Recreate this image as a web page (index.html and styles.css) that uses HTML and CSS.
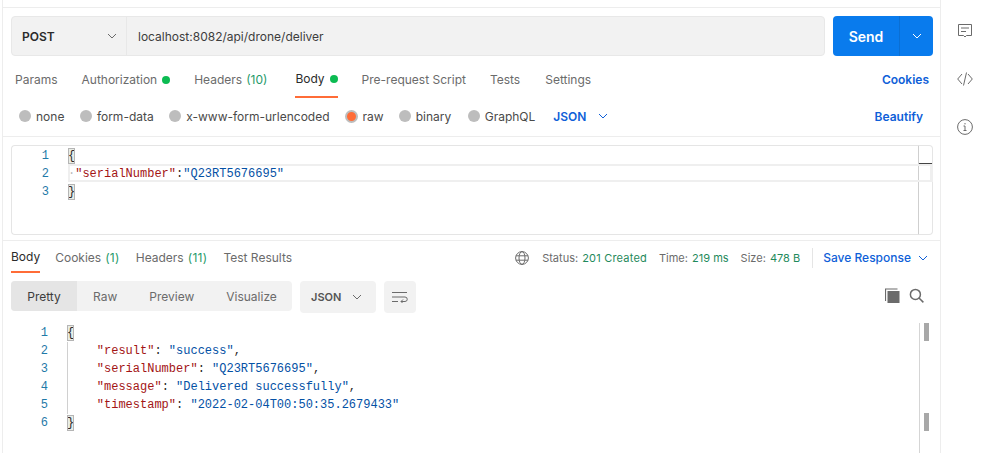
FILE: index.html
```html
<!DOCTYPE html>
<html lang="en">
<head>
<meta charset="utf-8">
<title>Postman request</title>
<link rel="stylesheet" href="styles.css">
</head>
<body>
<div class="app">
  <main class="main">
    <div class="urlrow">
      <div class="urlbar">
        <div class="method"><span>POST</span>
          <svg class="chev" width="12" height="12" viewBox="0 0 12 12"><path d="M2 4l4 4 4-4" fill="none" stroke="#6b6b6b" stroke-width="1"/></svg>
        </div>
        <div class="url">localhost:8082/api/drone/deliver</div>
      </div>
      <div class="send">
        <span class="send-label">Send</span>
        <span class="send-more"><svg width="12" height="12" viewBox="0 0 12 12"><path d="M2 4l4 4 4-4" fill="none" stroke="#fff" stroke-width="1"/></svg></span>
      </div>
    </div>

    <div class="reqtabs">
      <span class="tab t-params">Params</span>
      <span class="tab t-auth">Authorization<i class="dot"></i></span>
      <span class="tab t-headers">Headers <em>(10)</em></span>
      <span class="tab t-body active">Body<i class="dot"></i></span>
      <span class="tab t-pre">Pre-request Script</span>
      <span class="tab t-tests">Tests</span>
      <span class="tab t-settings">Settings</span>
      <span class="link cookies">Cookies</span>
    </div>

    <div class="bodyopts">
      <span class="radio r-none"><i></i>none</span>
      <span class="radio r-form"><i></i>form-data</span>
      <span class="radio r-url"><i></i>x-www-form-urlencoded</span>
      <span class="radio r-raw on"><i></i>raw</span>
      <span class="radio r-bin"><i></i>binary</span>
      <span class="radio r-gql"><i></i>GraphQL</span>
      <span class="link json">JSON<svg width="12" height="12" viewBox="0 0 12 12"><path d="M2 4l4 4 4-4" fill="none" stroke="#0f5fd8" stroke-width="1"/></svg></span>
      <span class="link beautify">Beautify</span>
    </div>

    <div class="editor">
      <div class="ed-code">
        <div class="ln"><span class="no">1</span><span class="code"><b class="br">{</b></span></div>
        <div class="ln"><span class="no">2</span><span class="code"><span class="sp">·</span><span class="k">"serialNumber"</span>:<span class="s">"Q23RT5676695"</span></span></div>
        <div class="ln"><span class="no">3</span><span class="code"><b class="br">}</b></span></div>
      </div>
      <div class="ed-scroll"><i></i></div>
      <div class="curline"></div>
    </div>

    <div class="restabs">
      <span class="rtab active">Body</span>
      <span class="rtab">Cookies <em>(1)</em></span>
      <span class="rtab">Headers <em>(11)</em></span>
      <span class="rtab">Test Results</span>
      <div class="status">
        <svg class="globe" width="14" height="14" viewBox="0 0 14 14" fill="none" stroke="#6b6b6b" stroke-width="1"><circle cx="7" cy="7" r="6.4"/><ellipse cx="7" cy="7" rx="3" ry="6.4"/><path d="M1 4.8h12M1 9.2h12"/></svg>
        <span class="st st-status">Status: <em>201 Created</em></span>
        <span class="st">Time: <em>219 ms</em></span>
        <span class="st">Size: <em>478 B</em></span>
        <span class="save">Save Response<svg width="12" height="12" viewBox="0 0 12 12"><path d="M2 4l4 4 4-4" fill="none" stroke="#0f5fd8" stroke-width="1"/></svg></span>
      </div>
    </div>

    <div class="toolbar">
      <div class="seg">
        <span class="segitem active">Pretty</span>
        <span class="segitem s-raw">Raw</span>
        <span class="segitem s-prev">Preview</span>
        <span class="segitem s-vis">Visualize</span>
      </div>
      <div class="fmt">JSON<svg width="12" height="12" viewBox="0 0 12 12"><path d="M2 4l4 4 4-4" fill="none" stroke="#6b6b6b" stroke-width="1"/></svg></div>
      <div class="wrap"><svg width="16" height="12" viewBox="0 0 16 12" fill="none" stroke="#6b6b6b" stroke-width="1"><path d="M0 1.5h15M0 6h13a2.2 2.2 0 0 1 0 4.5H9M11 8.5l-2 2 2 2M0 10.5h6"/></svg></div>
      <div class="tools">
        <svg width="15" height="15" viewBox="0 0 15 15"><path d="M0.5 13V1h12" fill="none" stroke="#6b6b6b" stroke-width="1.2"/><rect x="2.5" y="3" width="12" height="12" fill="#6b6b6b"/></svg>
        <svg width="15" height="15" viewBox="0 0 15 15" fill="none" stroke="#6b6b6b" stroke-width="1.5"><circle cx="6.4" cy="6.4" r="5"/><path d="M10 10l4.4 4.4"/></svg>
      </div>
    </div>

    <div class="response">
      <div class="resp-code">
        <div class="ln"><span class="no">1</span><span class="code"><b class="br">{</b></span></div>
        <div class="ln"><span class="no">2</span><span class="code guide">    <span class="k">"result"</span>: <span class="s">"success"</span>,</span></div>
        <div class="ln"><span class="no">3</span><span class="code guide">    <span class="k">"serialNumber"</span>: <span class="s">"Q23RT5676695"</span>,</span></div>
        <div class="ln"><span class="no">4</span><span class="code guide">    <span class="k">"message"</span>: <span class="s">"Delivered successfully"</span>,</span></div>
        <div class="ln"><span class="no">5</span><span class="code guide">    <span class="k">"timestamp"</span>: <span class="s">"2022-02-04T00:50:35.2679433"</span></span></div>
        <div class="ln"><span class="no">6</span><span class="code"><b class="br">}</b></span></div>
      </div>
      <div class="resp-scroll"><i></i><i></i></div>
    </div>
  </main>

  <aside class="side">
    <svg width="16" height="16" viewBox="0 0 16 16" fill="none" stroke="#6b6b6b" stroke-width="1"><path d="M1.5 1.5h13v11H9.5L8 14l-1.5-1.5h-5zM4 5h8M4 8.5h5"/></svg>
    <svg width="16" height="16" viewBox="0 0 16 16" fill="none" stroke="#6b6b6b" stroke-width="1"><path d="M5 3L0.7 8 5 13M11 3l4.3 5L11 13M9.5 1.5l-3 13"/></svg>
    <svg width="16" height="16" viewBox="0 0 16 16" fill="none" stroke="#6b6b6b" stroke-width="1"><circle cx="8" cy="8" r="7.4"/><path d="M8 7v4.5M6.5 7H8M6.5 11.5h3M8 4v1.4" /></svg>
  </aside>
</div>
</body>
</html>
```

FILE: styles.css
```css
* { box-sizing: border-box; }
html, body { margin: 0; padding: 0; background: #fff; }
body { width: 989px; height: 453px; overflow: hidden; font-family: Inter, "Liberation Sans", sans-serif; font-size: 12px; color: #6b6b6b; }
em { font-style: normal; }
i { font-style: normal; }

.app { display: flex; height: 453px; }
.main {
  width: 939px; height: 453px; margin-left: 2px;
  border-left: 1px solid #ededed; border-right: 1px solid #ededed;
  overflow: hidden; display: flex; flex-direction: column;
  position: relative; flex: none;
}
.side { flex: 1; display: flex; flex-direction: column; align-items: center; padding-top: 23px; gap: 32px; }

.urlrow { display: flex; margin-top: 7px; border-top: 1px solid #ededed; padding: 8px 7px 0 8px; height: 49px; gap: 8px; flex: none; }
.urlbar { flex: 1; display: flex; height: 40px; background: #f2f2f2; border: 1px solid #e8e8e8; border-radius: 4px; }
.method { width: 115px; border-right: 1px solid #e8e8e8; display: flex; align-items: center; justify-content: space-between; padding: 0 8px 0 10px; font-weight: 600; font-size: 12px; color: #2b2b2b; }
.url { padding-left: 11px; display: flex; align-items: center; font-size: 12px; color: #3d3d3d; }
.send { width: 100px; height: 40px; background: #097bed; border-radius: 4px; color: #fff; display: flex; font-weight: 600; font-size: 14px; align-items: stretch; }
.send-label { width: 67px; display: flex; align-items: center; justify-content: center; border-right: 1px solid #0a6fd4; }
.send-more { flex: 1; display: flex; align-items: center; justify-content: center; }

.reqtabs { display: flex; height: 46px; align-items: center; padding-left: 12px; padding-right: 11px; padding-top: 1px; font-size: 12px; flex: none; }
.tab { display: inline-flex; align-items: center; height: 28px; color: #6b6b6b; }
.tab em { color: #1f9a6a; margin-left: 4px; }
.dot { width: 8px; height: 8px; border-radius: 50%; background: #0cbb52; margin-left: 5px; }
.t-auth { margin-left: 24px; }
.t-headers { margin-left: 24px; }
.t-body { margin-left: 28px; color: #2b2b2b; border-bottom: 2px solid #ff6c37; margin-top: 5px; padding-bottom: 5px; height: 31px; }
.t-pre { margin-left: 24px; }
.t-tests { margin-left: 24px; }
.t-settings { margin-left: 25px; }
.link { color: #0f5fd8; font-weight: 500; }
.cookies { margin-left: auto; font-weight: 600; }

.bodyopts { display: flex; height: 34px; align-items: center; padding: 0 17px 6px 16px; font-size: 12px; color: #4a4a4a; flex: none; }
.radio { display: inline-flex; align-items: center; margin-right: 15px; }
.radio i { width: 12px; height: 12px; border-radius: 50%; background: #bdbdbd; margin-right: 5px; }
.radio.on i { width: 13px; height: 13px; background: #ff6c37; border: 2px solid #bdbdbd; }
.r-none { margin-right: 15.5px; }
.r-form { margin-right: 15.5px; }
.r-bin { margin-right: 16.5px; }
.r-gql { margin-right: 18px; }
.json { display: inline-flex; align-items: center; gap: 11px; font-weight: 600; }
.beautify { margin-left: auto; font-weight: 600; }

.editor { border-top: 1px solid #ededed; border-bottom: 1px solid #ededed; height: 105px; padding: 8px 7px 5px 8px; display: flex; position: relative; flex: none; }
.ed-code { flex: 1; border: 1px solid #e5e5e5; border-right: 0; border-radius: 4px 0 0 4px; padding-top: 1px; }
.ed-scroll { width: 15px; border: 1px solid #e5e5e5; border-left: 1px solid #cfcfcf; border-radius: 0 4px 4px 0; position: relative; }
.ed-scroll i { position: absolute; left: 0; right: 0; top: 17px; height: 2px; background: #444; }
.curline { position: absolute; left: 65px; right: 7px; top: 27px; height: 18px; border: 2px solid #efefef; border-right-width: 3px; }

.ln { display: flex; height: 18px; font-family: "Liberation Mono", "DejaVu Sans Mono", monospace; font-size: 12px; line-height: 18px; color: #2b2b2b; white-space: pre; }
.no { width: 37px; text-align: right; color: #1f7aa8; flex: none; }
.code { margin-left: 19px; flex: 1; }
.resp-code { padding-top: 1px; }
.k { color: #a31515; }
.s { color: #0451a5; }
.sp { color: #bbb; }
.br { display: inline-block; width: 7px; height: 16px; line-height: 16px; font-weight: 400; background: #e9ede6; outline: 1px solid #b5b5b5; outline-offset: -1px; vertical-align: top; margin-top: 1px; }

.restabs { display: flex; height: 32px; align-items: flex-start; padding-left: 8px; padding-right: 11px; font-size: 12px; flex: none; }
.rtab { display: inline-flex; align-items: center; height: 32px; margin-right: 16px; padding-top: 1px; }
.rtab em { color: #1f9a6a; margin-left: 4px; letter-spacing: 0.3px; }
.rtab.active { color: #2b2b2b; border-bottom: 2px solid #ff6c37; margin-right: 15px; }
.status { margin-left: auto; display: flex; align-items: center; height: 32px; padding-top: 1px; font-size: 11px; }
.globe { margin-right: 13px; }
.st { margin-right: 12px; }
.st em { color: #1f8a5c; margin-left: 1px; }
.st-status em { letter-spacing: 0.2px; }
.save { border-left: 1px solid #e5e5e5; padding-left: 10px; height: 20px; display: inline-flex; align-items: center; color: #0f5fd8; font-size: 12px; font-weight: 500; gap: 6px; }

.toolbar { display: flex; height: 50px; padding: 8px 16px 0 8px; align-items: flex-start; flex: none; }
.seg { display: flex; width: 281px; height: 30px; background: #f2f2f2; border-radius: 4px; align-items: center; overflow: hidden; }
.segitem.active { background: #e5e5e5; color: #3d3d3d; width: 66px; height: 30px; display: flex; align-items: center; justify-content: center; }
.s-raw { margin-left: 16px; }
.s-prev { margin-left: 32px; }
.s-vis { margin-left: 32px; }
.fmt { width: 76px; height: 32px; margin-left: 8px; background: #f2f2f2; border-radius: 4px; display: flex; align-items: center; justify-content: space-between; padding: 0 13px 0 11px; font-size: 11px; font-weight: 600; color: #555; }
.wrap { width: 32px; height: 32px; margin-left: 8px; background: #f2f2f2; border-radius: 4px; display: flex; align-items: center; justify-content: center; }
.tools { margin-left: auto; display: flex; gap: 9px; padding-top: 7px; }

.response { flex: 1; display: flex; padding-left: 8px; padding-right: 7px; }
.resp-code { flex: 1; }
.guide { border-left: 1px solid #d0d0d0; }
.resp-scroll { width: 14px; border-left: 1px solid #d5d5d5; position: relative; }
.resp-scroll i { position: absolute; left: 4px; width: 5px; height: 18px; background: #a8a8a8; top: 0; }
.resp-scroll i + i { top: 90px; }
```
